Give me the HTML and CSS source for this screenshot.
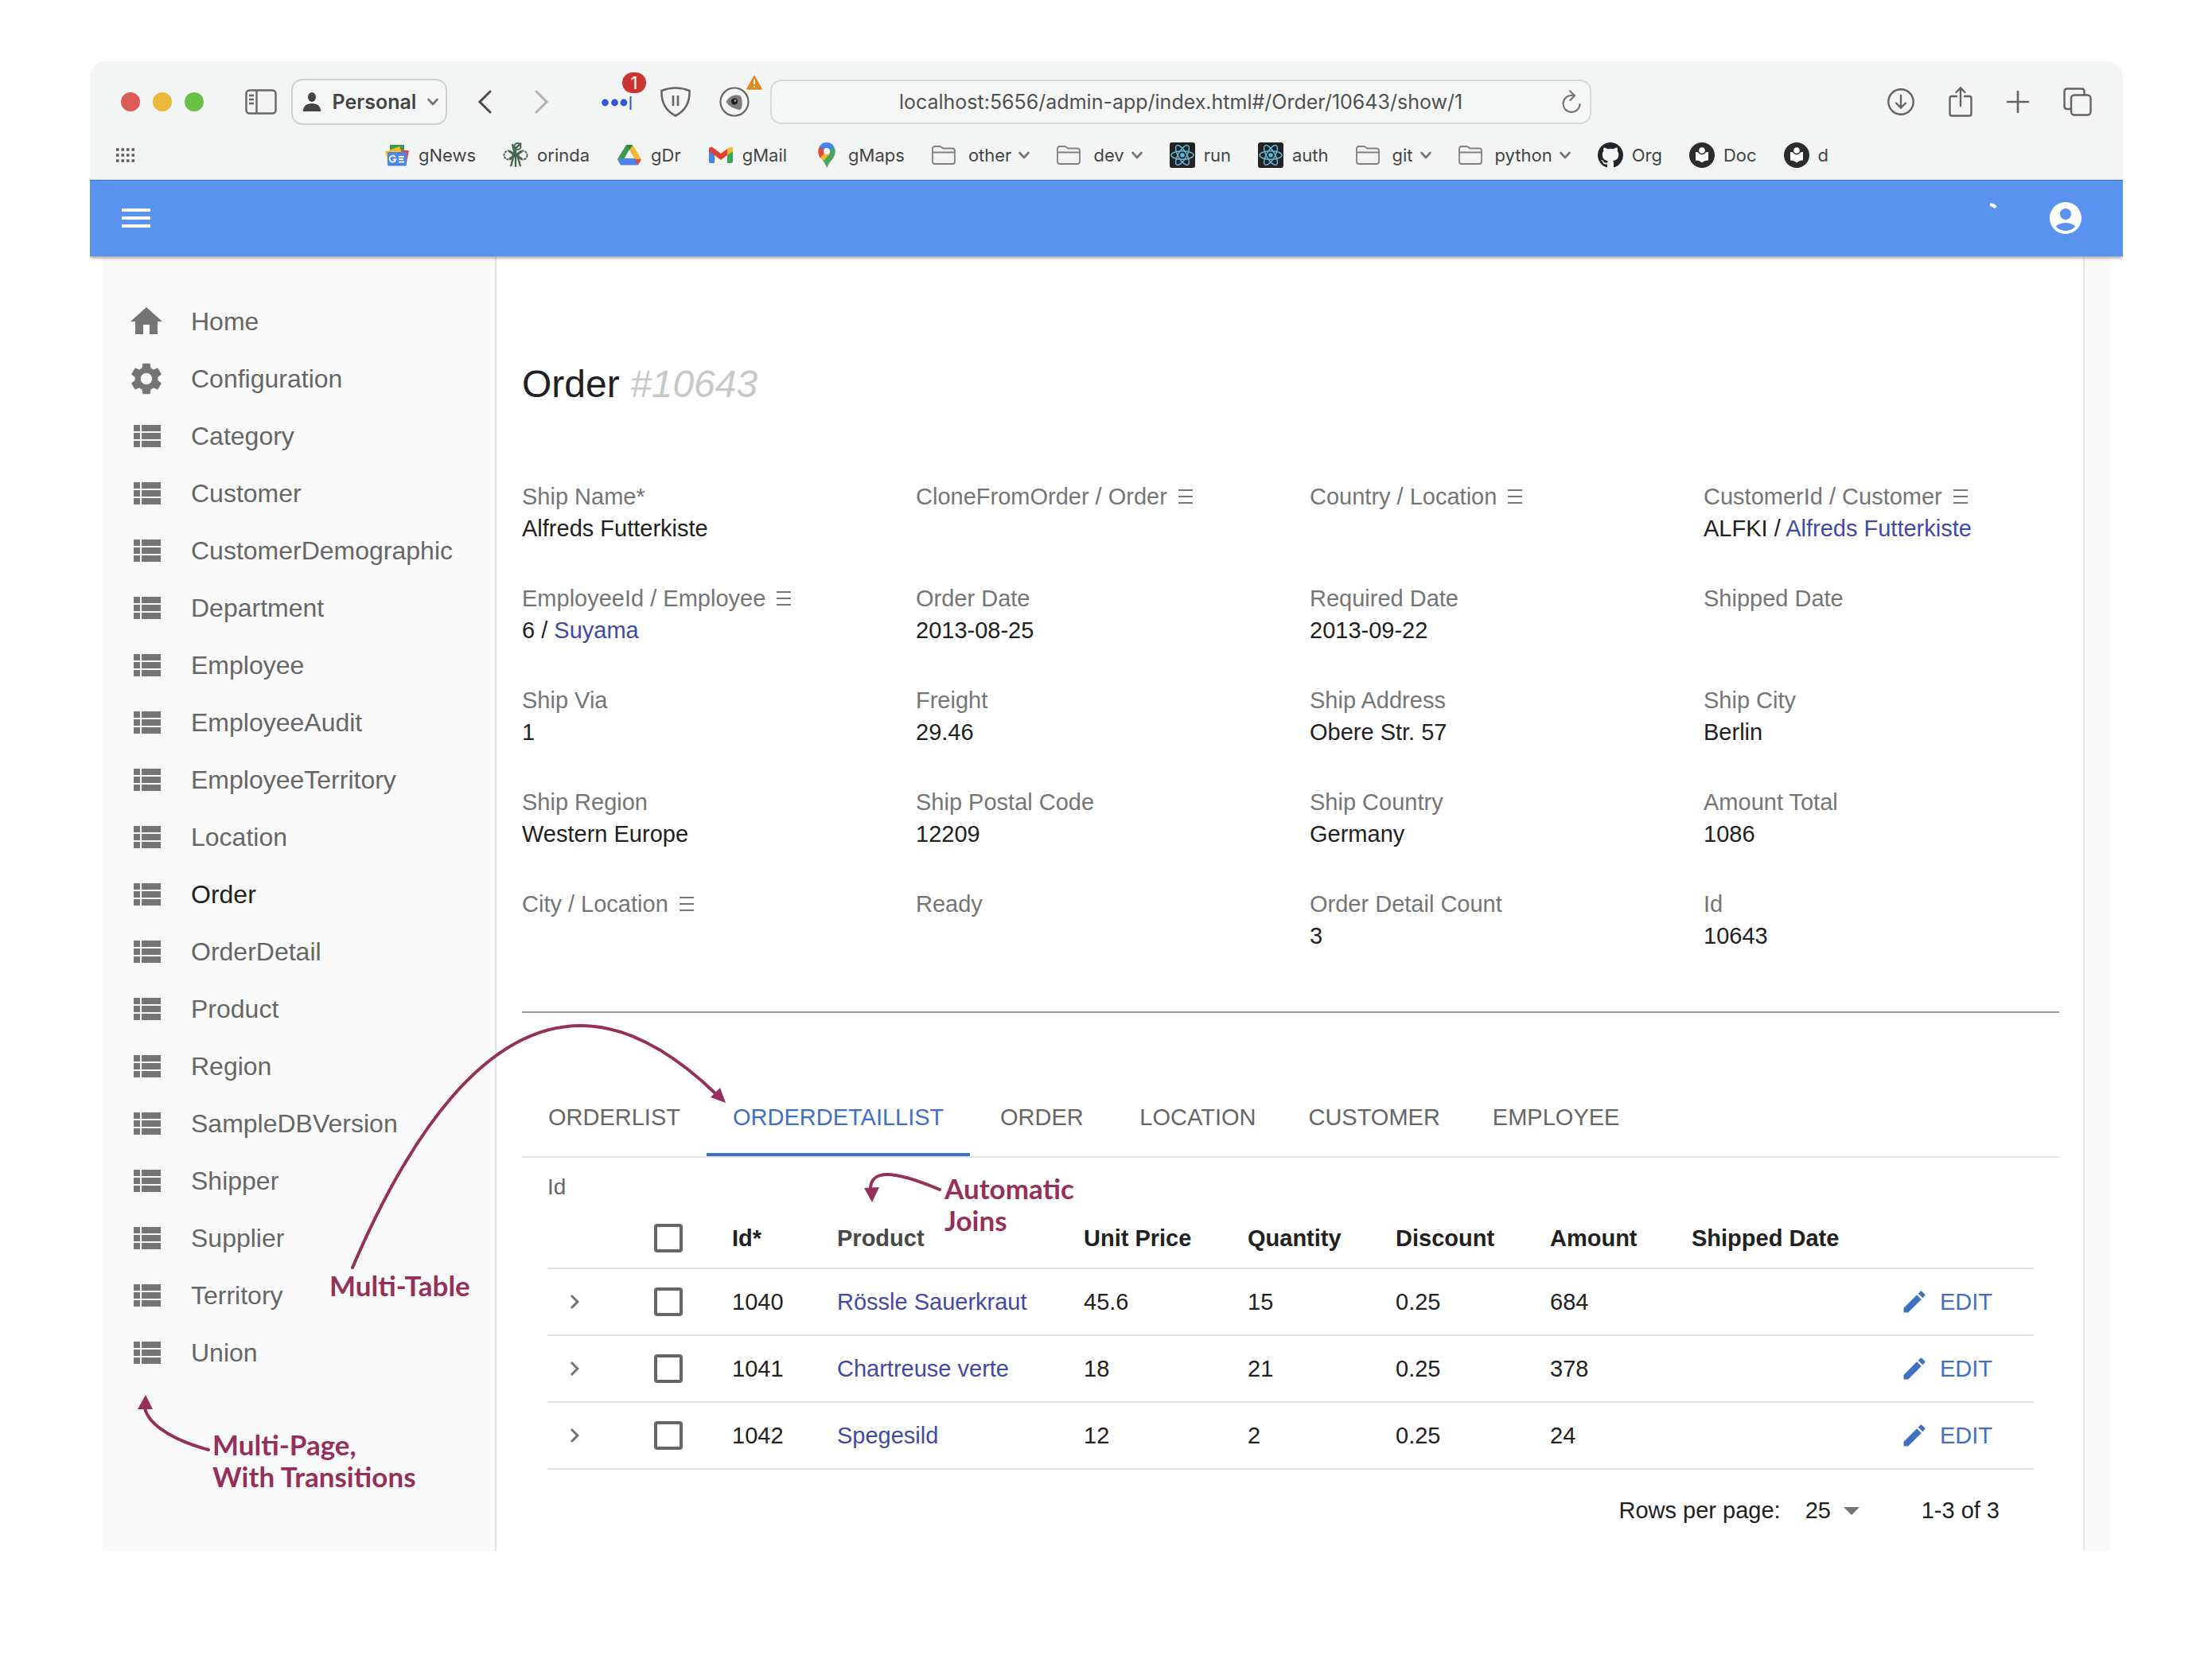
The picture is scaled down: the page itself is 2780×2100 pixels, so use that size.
FILE: index.html
```html
<!DOCTYPE html>
<html lang="en">
<head>
<meta charset="utf-8">
<title>Order #10643</title>
<link rel="stylesheet" href="styles.css">
</head>
<body>
<svg class="defs" aria-hidden="true">
  <symbol id="list" viewBox="0 0 24 24"><path d="M4 14h4v-4H4v4zm0 5h4v-4H4v4zM4 9h4V5H4v4zm5 5h12v-4H9v4zm0 5h12v-4H9v4zM9 5v4h12V5H9z"/></symbol>
  <symbol id="pencil" viewBox="0 0 24 24"><path d="M3 17.25V21h3.75L17.81 9.94l-3.75-3.75L3 17.25zM20.71 7.04c.39-.39.39-1.02 0-1.41l-2.34-2.34a.9959.9959 0 0 0-1.41 0l-1.83 1.83 3.75 3.75 1.83-1.83z"/></symbol>
  <symbol id="next" viewBox="0 0 24 24"><path d="M10 6 8.59 7.41 13.17 12l-4.58 4.59L10 18l6-6z"/></symbol>
  <symbol id="rows" viewBox="0 0 18 20"><path d="M0 2h18M0 10h18M0 18h18" fill="none" stroke="#7a7a7a" stroke-width="2"/></symbol>
  <symbol id="down" viewBox="0 0 14 10"><path d="M1.5 2 7 8l5.500-6" fill="none" stroke="#757575" stroke-width="2.600" stroke-linecap="round" stroke-linejoin="round"/></symbol>
  <symbol id="folder" viewBox="0 0 30 24"><path d="M1 20V4q0-3 3-3h6q1.500 0 2.500 1.200T15 3.500h11q3 0 3 3V20q0 3-3 3H4q-3 0-3-3zM1 8.500h28" fill="none" stroke="#808080" stroke-width="1.800"/></symbol>
  <symbol id="react" viewBox="0 0 32 32"><rect width="32" height="32" rx="3" fill="#222"/><g fill="none" stroke="#61b8da" stroke-width="1.500"><ellipse cx="16" cy="16" rx="14" ry="5.300"/><ellipse cx="16" cy="16" rx="14" ry="5.300" transform="rotate(60 16 16)"/><ellipse cx="16" cy="16" rx="14" ry="5.300" transform="rotate(120 16 16)"/></g><circle cx="16" cy="16" r="2.800" fill="#61b8da"/></symbol>
  <symbol id="reader" viewBox="0 0 32 32"><circle cx="16" cy="16" r="16" fill="#2c2c2c"/><path d="M8 12q5 0 8 3 3-3 8-3v10.500q-5 0-8 3-3-3-8-3z" fill="#fff"/><circle cx="16" cy="10.500" r="5" fill="#2c2c2c"/><circle cx="16" cy="10" r="3.800" fill="#fff"/></symbol>
</svg>

<div class="window">
  <header class="browser">
    <div class="toolbar">
      <div class="lights"><span class="light red"></span><span class="light amber"></span><span class="light green"></span></div>
      <button class="bare side-toggle" aria-label="Sidebar"><svg width="40" height="32" viewBox="0 0 40 32"><g fill="none" stroke="#666" stroke-width="2.400"><rect x="1.500" y="1.500" width="37" height="29" rx="4"/><path d="M14.500 2v28M5 8h6M5 13h6M5 18h6"/></g></svg></button>
      <button class="profile">
        <svg width="24" height="24" viewBox="0 0 24 24" fill="#444"><ellipse cx="12" cy="6" rx="5" ry="6"/><path d="M1 24q0-10 11-10t11 10z"/></svg>
        <span>Personal</span>
        <svg width="14" height="10"><use href="#down"/></svg>
      </button>
      <div class="history">
        <button class="bare" aria-label="Back"><svg width="18" height="30" viewBox="0 0 18 30"><path d="M16 2 3 15l13 13" fill="none" stroke="#4a4a4a" stroke-width="3" stroke-linecap="round"/></svg></button>
        <button class="bare" aria-label="Forward"><svg width="18" height="30" viewBox="0 0 18 30"><path d="M2 2l13 13L2 28" fill="none" stroke="#b2b2b2" stroke-width="3" stroke-linecap="round"/></svg></button>
      </div>
      <div class="extensions">
        <button class="bare ext" aria-label="Passwords"><svg width="38" height="38" viewBox="0 0 38 38"><g fill="#2f57d6"><circle cx="4.500" cy="20" r="4.400"/><circle cx="16.500" cy="20" r="4.400"/><circle cx="28" cy="20" r="4.400"/><path d="M35.500 12h2v17h-2z"/></g></svg><span class="badge">1</span></button>
        <button class="bare ext" aria-label="Shield"><svg width="38" height="38" viewBox="0 0 38 38"><path d="M19 1.500Q28 1.500 36.500 5 37.500 27 19 36.500.5 27 1.500 5 10 1.500 19 1.500z" fill="none" stroke="#666" stroke-width="2.600"/><path d="M16 11v13M22 11v13" stroke="#666" stroke-width="2.600"/></svg></button>
        <button class="bare ext" aria-label="Privacy"><svg width="38" height="38" viewBox="0 0 38 38"><circle cx="19" cy="19" r="17.500" fill="none" stroke="#666" stroke-width="2.200"/><path d="M9 18Q13 11 20 10.500q6-.5 7 1.500 3 7 1 15-1 3-5 1.500Q13 26 9 20q-1-1 0-2z" fill="#7d7d7d"/><circle cx="19" cy="18.500" r="4" fill="#222"/><circle cx="20" cy="17.500" r="1.300" fill="#bbb"/></svg><svg class="warn" width="20" height="18" viewBox="0 0 20 18"><path d="M10 1.500 18.500 16.500h-17z" fill="#dd8a26" stroke="#dd8a26" stroke-width="2.500" stroke-linejoin="round"/><path d="M10 5v6M10 13v2" stroke="#fff" stroke-width="1.800"/></svg></button>
      </div>
      <div class="address">
        <input class="url" type="text" aria-label="Address" value="localhost:5656/admin-app/index.html#/Order/10643/show/1">
        <button class="bare reload" aria-label="Reload"><svg width="26" height="30" viewBox="0 0 26 30"><path d="M14 7A10.500 10.500 0 1 0 23.500 18M11 1.500 17 7l-5.500 6" fill="none" stroke="#757575" stroke-width="2.200" stroke-linecap="round"/></svg></button>
      </div>
      <div class="actions">
        <button class="bare" aria-label="Downloads"><svg width="34" height="36" viewBox="0 0 34 36"><g fill="none" stroke="#636363" stroke-width="2.400" stroke-linecap="round"><circle cx="17" cy="18" r="15.700"/><path d="M17 10v15M11 19.500l6 6 6-6"/></g></svg></button>
        <button class="bare" aria-label="Share"><svg width="30" height="40" viewBox="0 0 30 40"><g fill="none" stroke="#636363" stroke-width="2.400" stroke-linecap="round"><path d="M10 13H4q-2.500 0-2.500 2.500V35q0 2.500 2.500 2.500h22q2.500 0 2.500-2.500V15.500Q28.500 13 26 13h-6M15 25V3M9.500 8 15 2.500 20.500 8"/></g></svg></button>
        <button class="bare" aria-label="New tab"><svg width="28" height="28" viewBox="0 0 28 28"><path d="M14 1v26M1 14h26" stroke="#636363" stroke-width="2.600" stroke-linecap="round"/></svg></button>
        <button class="bare" aria-label="Tabs"><svg width="36" height="36" viewBox="0 0 36 36"><g fill="none" stroke="#636363" stroke-width="2.400"><rect x="10" y="9.500" width="24.500" height="25" rx="4"/><path d="M10 27H5q-3.500 0-3.500-3.500V5Q1.500 1.500 5 1.500h18q3.500 0 3.500 3.500v4.500"/></g></svg></button>
      </div>
    </div>
    <nav class="bookmarks">
      <button class="bare grid-toggle" aria-label="Start page"><svg width="24" height="18" viewBox="0 0 24 18"><path d="M1 2h23M1 9h23M1 16h23" stroke="#5c5c5c" stroke-width="3.500" stroke-dasharray="3.500 3"/></svg></button>
      <div class="links">
        <a href="#gnews"><svg width="32" height="32" viewBox="0 0 32 32"><path d="M7 3h18v10H7z" fill="#3c9a50"/><path d="m1 11 4 16 6-2V9z" fill="#f6bf26"/><path d="m6 10 13-5 3 8H6z" fill="#f6bf26"/><path d="m21 9 10 1.500-3.500 17L22 24z" fill="#dd4b3e"/><rect x="4" y="12" width="24" height="17.500" rx="1.500" fill="#4f83ec"/><path d="M14 18.500a4 4 0 1 0 .5 3H11M18 18h7M18 21h6M18 24.500h7" fill="none" stroke="#fff" stroke-width="1.800"/></svg>gNews</a>
        <a href="#orinda"><svg width="32" height="32" viewBox="0 0 32 32"><g fill="none" stroke="#48684a" stroke-width="2"><circle cx="18.500" cy="5" r="4"/><path d="m15 8 8-7M12 2l3 14M16 8v23M13 19l-3 11M19 19l3 11" stroke-width="2.400"/><circle cx="7" cy="16" r="5.500" stroke-dasharray="3 1"/><circle cx="25" cy="16" r="5.500" stroke-dasharray="3 1"/><path d="m8 11 16 10M24 11 8 21" stroke-width="3"/></g></svg>orinda</a>
        <a href="#gdr"><svg width="32" height="32" viewBox="0 0 32 32"><path d="M12 3h8l-4 6L5 28 1 21z" fill="#3c9a50"/><path d="M12 3h8l11 18h-8z" fill="#f6b729"/><path d="M12 3h8l-4 7z" fill="#2c8544"/><path d="M5.500 20h18L27 28.500H5L1 21z" fill="#4f83ec"/><path d="M23 21h8l-4 7.500z" fill="#dd4b3e"/></svg>gDr</a>
        <a href="#gmail"><svg width="32" height="32" viewBox="0 0 32 32"><path d="M1 9v15q0 2 2 2h5V13z" fill="#4384f3"/><path d="M31 9v15q0 2-2 2h-5V13z" fill="#34a853"/><path d="M1 9q0-4 4-3l3 2 8 6 8-6v8l-8 6-8-6-7-5z" fill="#e0402f"/><path d="M24 8l3-2q4-1 4 3v2l-7 5z" fill="#f6b729"/></svg>gMail</a>
        <a href="#gmaps"><svg width="32" height="32" viewBox="0 0 32 32"><path d="M7 5Q10 0 16 0q6 0 9 5l-9 10z" fill="#4384f3"/><path d="M7 5 16 11 8 20Q3 12 7 5z" fill="#e04a3c"/><path d="M8 19 25 5q4 7-1 15-5 5-8 12-2-7-8-13z" fill="#4ba562"/><path d="m8 19 8-9 4 4-8 9z" fill="#f6b729"/><circle cx="16" cy="11" r="4" fill="#fff"/></svg>gMaps</a>
        <a class="dir" href="#other"><svg width="30" height="24"><use href="#folder"/></svg>other<svg class="more" width="14" height="10"><use href="#down"/></svg></a>
        <a class="dir" href="#dev"><svg width="30" height="24"><use href="#folder"/></svg>dev<svg class="more" width="14" height="10"><use href="#down"/></svg></a>
        <a href="#run"><svg width="32" height="32"><use href="#react"/></svg>run</a>
        <a href="#auth"><svg width="32" height="32"><use href="#react"/></svg>auth</a>
        <a class="dir" href="#git"><svg width="30" height="24"><use href="#folder"/></svg>git<svg class="more" width="14" height="10"><use href="#down"/></svg></a>
        <a class="dir" href="#python"><svg width="30" height="24"><use href="#folder"/></svg>python<svg class="more" width="14" height="10"><use href="#down"/></svg></a>
        <a href="#org"><svg width="32" height="32" viewBox="0 0 16 16"><path fill="#22262b" d="M8 0C3.580 0 0 3.580 0 8c0 3.540 2.290 6.530 5.470 7.590.4.070.55-.17.55-.38 0-.19-.01-.82-.01-1.490-2.010.37-2.530-.49-2.690-.94-.09-.23-.48-.94-.82-1.130-.28-.15-.68-.52-.01-.53.63-.01 1.080.58 1.230.82.72 1.210 1.870.87 2.330.66.07-.52.28-.87.51-1.070-1.780-.2-3.640-.89-3.640-3.950 0-.87.31-1.590.82-2.150-.08-.2-.36-1.020.08-2.120 0 0 .67-.21 2.200.82.64-.18 1.320-.27 2-.27s1.360.09 2 .27c1.530-1.040 2.200-.82 2.200-.82.44 1.100.16 1.920.08 2.120.51.56.82 1.270.82 2.150 0 3.070-1.870 3.750-3.650 3.950.29.25.54.73.54 1.480 0 1.070-.01 1.930-.01 2.200 0 .21.15.46.55.38A8.010 8.010 0 0 0 16 8c0-4.420-3.580-8-8-8z"/></svg>Org</a>
        <a href="#doc"><svg width="32" height="32"><use href="#reader"/></svg>Doc</a>
        <a href="#d"><svg width="32" height="32"><use href="#reader"/></svg>d</a>
      </div>
    </nav>
  </header>

  <div class="appbar">
    <button class="bare" aria-label="Menu"><svg width="48" height="48" viewBox="0 0 24 24" fill="#fff"><path d="M3 18h18v-2H3v2zm0-5h18v-2H3v2zm0-7v2h18V6H3z"/></svg></button>
    <div class="appbar-end">
      <svg width="48" height="48" viewBox="0 0 48 48" aria-label="Loading"><path d="M21 7q5 .5 7 4" fill="none" stroke="#fff" stroke-width="4"/></svg>
      <button class="bare" aria-label="Profile"><svg width="48" height="48" viewBox="0 0 24 24" fill="#fff"><path d="M12 2C6.480 2 2 6.480 2 12s4.480 10 10 10 10-4.480 10-10S17.520 2 12 2zm0 4c1.930 0 3.500 1.570 3.500 3.500S13.930 13 12 13s-3.500-1.570-3.500-3.500S10.070 6 12 6zm0 14c-2.030 0-4.430-.82-6.140-2.880C7.550 15.800 9.680 15 12 15s4.450.8 6.140 2.120C16.430 19.180 14.030 20 12 20z"/></svg></button>
    </div>
  </div>

  <div class="body">
    <nav class="sidebar">
      <a href="#home"><svg viewBox="0 0 24 24"><path d="M10 20v-6h4v6h5v-8h3L12 3 2 12h3v8z"/></svg>Home</a>
      <a href="#configuration"><svg viewBox="0 0 24 24"><path d="M19.140 12.940c.04-.3.06-.61.06-.94 0-.32-.02-.64-.07-.94l2.030-1.580c.18-.14.23-.41.12-.61l-1.920-3.320c-.12-.22-.37-.29-.59-.22l-2.390.96c-.5-.38-1.030-.7-1.620-.94l-.36-2.540c-.04-.24-.24-.41-.48-.41h-3.840c-.24 0-.43.17-.47.41l-.36 2.540c-.59.24-1.130.57-1.620.94l-2.390-.96c-.22-.08-.47 0-.59.22L2.740 8.870c-.12.21-.08.47.12.61l2.030 1.580c-.05.3-.09.63-.09.94s.02.64.07.94l-2.030 1.580c-.18.14-.23.41-.12.61l1.920 3.320c.12.22.37.29.59.22l2.390-.96c.5.38 1.030.7 1.620.94l.36 2.540c.05.24.24.41.48.41h3.840c.24 0 .44-.17.47-.41l.36-2.540c.59-.24 1.130-.56 1.620-.94l2.390.96c.22.08.47 0 .59-.22l1.920-3.320c.12-.22.07-.47-.12-.61l-2.010-1.580zM12 15.600c-1.980 0-3.600-1.620-3.600-3.600s1.620-3.600 3.600-3.600 3.600 1.620 3.600 3.600-1.620 3.600-3.600 3.600z"/></svg>Configuration</a>
      <a href="#category"><svg><use href="#list"/></svg>Category</a>
      <a href="#customer"><svg><use href="#list"/></svg>Customer</a>
      <a href="#customerdemographic"><svg><use href="#list"/></svg>CustomerDemographic</a>
      <a href="#department"><svg><use href="#list"/></svg>Department</a>
      <a href="#employee"><svg><use href="#list"/></svg>Employee</a>
      <a href="#employeeaudit"><svg><use href="#list"/></svg>EmployeeAudit</a>
      <a href="#employeeterritory"><svg><use href="#list"/></svg>EmployeeTerritory</a>
      <a href="#location"><svg><use href="#list"/></svg>Location</a>
      <a class="current" href="#order" aria-current="page"><svg><use href="#list"/></svg>Order</a>
      <a href="#orderdetail"><svg><use href="#list"/></svg>OrderDetail</a>
      <a href="#product"><svg><use href="#list"/></svg>Product</a>
      <a href="#region"><svg><use href="#list"/></svg>Region</a>
      <a href="#sampledbversion"><svg><use href="#list"/></svg>SampleDBVersion</a>
      <a href="#shipper"><svg><use href="#list"/></svg>Shipper</a>
      <a href="#supplier"><svg><use href="#list"/></svg>Supplier</a>
      <a href="#territory"><svg><use href="#list"/></svg>Territory</a>
      <a href="#union"><svg><use href="#list"/></svg>Union</a>
    </nav>

    <main class="main">
      <h1 class="title">Order <i>#10643</i></h1>
      <dl class="fields">
        <div><dt>Ship Name*</dt><dd>Alfreds Futterkiste</dd></div>
        <div><dt>CloneFromOrder / Order <svg><use href="#rows"/></svg></dt><dd></dd></div>
        <div><dt>Country / Location <svg><use href="#rows"/></svg></dt><dd></dd></div>
        <div><dt>CustomerId / Customer <svg><use href="#rows"/></svg></dt><dd>ALFKI / <a href="#alfki">Alfreds Futterkiste</a></dd></div>
        <div><dt>EmployeeId / Employee <svg><use href="#rows"/></svg></dt><dd>6 / <a href="#suyama">Suyama</a></dd></div>
        <div><dt>Order Date</dt><dd>2013-08-25</dd></div>
        <div><dt>Required Date</dt><dd>2013-09-22</dd></div>
        <div><dt>Shipped Date</dt><dd></dd></div>
        <div><dt>Ship Via</dt><dd>1</dd></div>
        <div><dt>Freight</dt><dd>29.46</dd></div>
        <div><dt>Ship Address</dt><dd>Obere Str. 57</dd></div>
        <div><dt>Ship City</dt><dd>Berlin</dd></div>
        <div><dt>Ship Region</dt><dd>Western Europe</dd></div>
        <div><dt>Ship Postal Code</dt><dd>12209</dd></div>
        <div><dt>Ship Country</dt><dd>Germany</dd></div>
        <div><dt>Amount Total</dt><dd>1086</dd></div>
        <div><dt>City / Location <svg><use href="#rows"/></svg></dt><dd></dd></div>
        <div><dt>Ready</dt><dd></dd></div>
        <div><dt>Order Detail Count</dt><dd>3</dd></div>
        <div><dt>Id</dt><dd>10643</dd></div>
      </dl>
      <hr class="rule">
      <div class="tabs" role="tablist">
        <button role="tab">ORDERLIST</button>
        <button role="tab" class="selected" aria-selected="true">ORDERDETAILLIST</button>
        <button role="tab">ORDER</button>
        <button role="tab">LOCATION</button>
        <button role="tab">CUSTOMER</button>
        <button role="tab">EMPLOYEE</button>
      </div>
      <section class="panel">
        <p class="sort">Id</p>
        <table class="details">
          <colgroup><col class="c-expand"><col class="c-check"><col class="c-id"><col class="c-product"><col class="c-price"><col class="c-quantity"><col class="c-discount"><col class="c-amount"><col class="c-shipped"><col></colgroup>
          <thead>
            <tr><th></th><th class="check"><input type="checkbox" aria-label="Select all"></th><th>Id*</th><th class="sorted">Product</th><th>Unit Price</th><th>Quantity</th><th>Discount</th><th>Amount</th><th>Shipped Date</th><th></th></tr>
          </thead>
          <tbody>
            <tr><td class="expand"><button class="bare" aria-label="Expand"><svg width="36" height="36"><use href="#next"/></svg></button></td><td class="check"><input type="checkbox" aria-label="Select 1040"></td><td>1040</td><td><a href="#p1040">Rössle Sauerkraut</a></td><td>45.6</td><td>15</td><td>0.25</td><td>684</td><td></td><td><button class="edit"><svg width="36" height="36"><use href="#pencil"/></svg>EDIT</button></td></tr>
            <tr><td class="expand"><button class="bare" aria-label="Expand"><svg width="36" height="36"><use href="#next"/></svg></button></td><td class="check"><input type="checkbox" aria-label="Select 1041"></td><td>1041</td><td><a href="#p1041">Chartreuse verte</a></td><td>18</td><td>21</td><td>0.25</td><td>378</td><td></td><td><button class="edit"><svg width="36" height="36"><use href="#pencil"/></svg>EDIT</button></td></tr>
            <tr><td class="expand"><button class="bare" aria-label="Expand"><svg width="36" height="36"><use href="#next"/></svg></button></td><td class="check"><input type="checkbox" aria-label="Select 1042"></td><td>1042</td><td><a href="#p1042">Spegesild</a></td><td>12</td><td>2</td><td>0.25</td><td>24</td><td></td><td><button class="edit"><svg width="36" height="36"><use href="#pencil"/></svg>EDIT</button></td></tr>
          </tbody>
        </table>
        <div class="pager">
          <label for="rows-per-page">Rows per page:</label>
          <span class="picker"><select id="rows-per-page"><option>25</option></select><svg width="48" height="48" viewBox="0 0 24 24"><path d="m7 10 5 5 5-5z" fill="#757575"/></svg></span>
          <span class="range">1-3 of 3</span>
        </div>
      </section>
    </main>
  </div>
</div>

<svg class="arrows" width="1300" height="1900" viewBox="0 0 1300 1900" aria-hidden="true">
  <g fill="none" stroke="#96305b" stroke-width="4" stroke-linecap="round">
    <path d="M443 1593C515 1425 610 1289 730 1289C790 1289 848 1325 900 1375"/>
    <path d="M1181 1495C1155 1484 1130 1476 1115 1476C1100 1476 1094 1484 1094 1494"/>
    <path d="M262 1822C225 1812 188 1794 182 1770"/>
  </g>
  <path fill="#96305b" d="M912 1386 893 1379 905 1367zM1096 1511 1086 1493 1105 1492zM183 1753 173 1771H192z"/>
</svg>
<p class="note note-table">Multi-Table</p>
<p class="note note-joins">Automatic<br>Joins</p>
<p class="note note-page">Multi-Page,<br>With Transitions</p>
</body>
</html>
```
FILE: styles.css
```css
* { box-sizing: border-box; }

body {
  margin: 0;
  padding: 77px 112px 149px 113px;
  position: relative;
  background: #fff;
  color: #212121;
  font-family: "Liberation Sans", Arial, sans-serif;
  font-size: 29px;
  line-height: 40px;
}

button, input, select { font: inherit; color: inherit; }
a { color: #3f4aa5; text-decoration: none; }
svg { display: block; flex: none; }
.defs { position: absolute; width: 0; height: 0; }

.bare {
  display: block;
  padding: 0;
  border: 0;
  background: none;
}

.window {
  border-radius: 20px;
  overflow: hidden;
  background: #fff;
}

/* Browser chrome */
.browser {
  background: #f3f5f4;
  color: #444;
  font-family: Inter, sans-serif;
  padding-bottom: 15px;
}

.toolbar {
  display: flex;
  align-items: center;
  height: 102px;
  padding: 0 39px;
}

.lights { display: flex; gap: 16px; }
.light { width: 24px; height: 24px; border-radius: 50%; }
.red { background: #dd5b56; }
.amber { background: #e9b73e; }
.green { background: #67c245; }

.side-toggle { margin: 0 18px 0 52px; }

.profile {
  display: flex;
  align-items: center;
  justify-content: space-between;
  width: 196px;
  height: 58px;
  padding: 0 9px 0 12px;
  border: 2px solid #cfd1d0;
  border-radius: 14px;
  background: #f5f7f6;
  color: #444;
  font-size: 25px;
  font-weight: 600;
}

.history { display: flex; gap: 54px; margin: 0 66px 0 38px; }

.extensions { display: flex; gap: 36px; margin-right: 26px; }
.ext { position: relative; }
.badge {
  position: absolute;
  top: -18px;
  right: -18px;
  width: 30px;
  height: 26px;
  border-radius: 13px;
  background: #cb3430;
  color: #fff;
  font-size: 22px;
  line-height: 26px;
  text-align: center;
}
.warn { position: absolute; top: -14px; right: -16px; }

.address { position: relative; flex: 1; margin-right: 372px; }
.url {
  display: block;
  width: 100%;
  height: 56px;
  padding: 0 56px;
  border: 2px solid #d6d8d7;
  border-radius: 14px;
  background: #f5f7f6;
  color: #505050;
  font-size: 25px;
  text-align: center;
}
.reload { position: absolute; right: 12px; top: 13px; }

.actions { display: flex; align-items: center; gap: 43px; }

.bookmarks {
  display: grid;
  grid-template-columns: 1fr auto 1fr;
  align-items: center;
  height: 32px;
  padding: 0 32px;
  font-size: 22px;
  line-height: 32px;
}
.links { display: flex; align-items: center; gap: 34px; }
.links a { display: flex; align-items: center; gap: 11px; color: #444; }
.links .dir { gap: 16px; }
.links .more { margin-left: -7px; }

/* Application bar */
.appbar {
  position: relative;
  display: flex;
  align-items: center;
  justify-content: space-between;
  height: 96px;
  padding: 0 48px 0 34px;
  background: #5893ef;
  box-shadow: inset 0 1px #3f6fbd, 0 2px 4px rgba(0, 0, 0, 0.4);
}
.appbar-end { display: flex; gap: 44px; }

/* Page body */
.body {
  display: flex;
  margin: 0 16px;
  padding-right: 32px;
  background: #fafafa;
}

.sidebar {
  flex: none;
  width: 495px;
  padding-top: 46px;
  border-right: 2px solid #e4e4e4;
}
.sidebar a {
  display: flex;
  align-items: center;
  gap: 32px;
  height: 72px;
  padding-left: 31px;
  color: #666;
  font-size: 32px;
}
.sidebar svg { width: 48px; height: 48px; fill: #757575; }
.sidebar .current { color: #212121; }

.main {
  flex: 1;
  min-width: 0;
  padding: 129px 30px 0 32px;
  border-right: 2px solid #e8e8e8;
  background: #fff;
}

.title {
  margin: 0 0 89px;
  font-size: 48px;
  font-weight: 400;
  line-height: 64px;
}
.title i { color: #c8c8c8; }

.fields {
  display: grid;
  grid-template-columns: repeat(4, 1fr);
  gap: 48px;
  margin: 0;
}
.fields dt {
  display: flex;
  align-items: center;
  gap: 14px;
  color: #757575;
}
.fields dt svg { width: 18px; height: 20px; }
.fields dd { height: 40px; margin: 0; }

.rule {
  height: 2px;
  margin: 75px 0 84px;
  border: 0;
  background: #999;
}

.tabs { display: flex; border-bottom: 2px solid #e4e4e4; }
.tabs button {
  min-width: 180px;
  height: 96px;
  padding: 2px 33px 0;
  border: 0;
  border-bottom: 4px solid transparent;
  background: none;
  color: #666;
}
.tabs .selected { border-color: #3f70c4; color: #3f70c4; }

.panel { padding: 17px 32px 0; }
.sort { margin: 0 0 6px; color: #666; font-size: 28px; }

.details {
  width: 100%;
  table-layout: fixed;
  border-collapse: separate;
  border-spacing: 0;
}
.c-expand { width: 104px; }
.c-check { width: 96px; }
.c-id { width: 132px; }
.c-product { width: 310px; }
.c-price { width: 206px; }
.c-quantity { width: 186px; }
.c-discount { width: 194px; }
.c-amount { width: 178px; }
.c-shipped { width: 262px; }

.details th, .details td {
  height: 84px;
  padding: 0 0 0 32px;
  border-bottom: 2px solid #e0e0e0;
  text-align: left;
  white-space: nowrap;
}
.details th { height: 77px; }
.details .sorted { color: #484848; }
.details .check { padding-left: 30px; }
.details .expand { padding-left: 16px; }
.details .expand svg { fill: #757575; }

.details input {
  appearance: none;
  display: block;
  width: 36px;
  height: 36px;
  margin: 0;
  border: 4px solid #666;
  border-radius: 4px;
}

.edit {
  display: flex;
  align-items: center;
  gap: 14px;
  padding: 0;
  border: 0;
  background: none;
  color: #3f70c4;
}
.edit svg { fill: #3f70c4; }

.pager {
  display: flex;
  align-items: center;
  justify-content: flex-end;
  height: 102px;
  padding-right: 43px;
}
.picker { position: relative; margin: 0 64px 0 31px; }
.picker select {
  display: block;
  width: 82px;
  padding: 0;
  border: 0;
  appearance: none;
  background: none;
}
.picker svg { position: absolute; right: 0; top: -4px; pointer-events: none; }

/* Annotations over the page */
.arrows { position: absolute; left: 0; top: 0; pointer-events: none; }
.note {
  position: absolute;
  margin: 0;
  color: #96305b;
  font-family: Lato, sans-serif;
  font-size: 35px;
  font-weight: 700;
}
.note-table { left: 414px; top: 1595px; }
.note-joins { left: 1187px; top: 1473px; }
.note-page { left: 267px; top: 1795px; }
```
